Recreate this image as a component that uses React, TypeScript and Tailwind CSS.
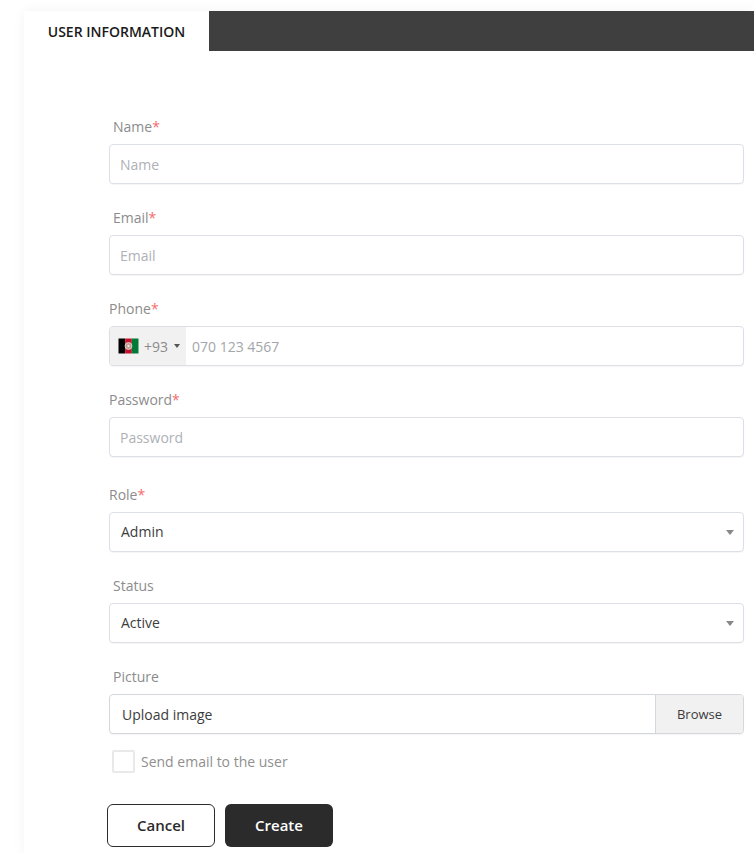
const font = { fontFamily: '"Open Sans", sans-serif' };

function Label({ text, req, mt = "", flush }: { text: string; req?: boolean; mt?: string; flush?: boolean }) {
  return (
    <div className={`h-[24px] text-[14px] leading-[24px] text-[#8c8c8c] ${flush ? "" : "pl-[4px]"} ${mt}`}>
      {text}
      {req && <span className="text-[#f56c6c]">*</span>}
    </div>
  );
}

function TextField({ placeholder }: { placeholder: string }) {
  return (
    <div className="mt-[5px] flex h-[40px] items-center rounded-[4px] border border-[#dcdfe8] bg-white pl-[10px] text-[14px] text-[#aeb1b6] shadow-[0_1px_1px_rgba(0,0,0,0.04)]">
      {placeholder}
    </div>
  );
}

function SelectField({ value }: { value: string }) {
  return (
    <div className="mt-[5px] flex h-[40px] items-center justify-between rounded-[4px] border border-[#dcdfe8] bg-white pb-[2px] pl-[11px] pr-[9px] text-[14px] text-[#3c3c3c] shadow-[0_1px_1px_rgba(0,0,0,0.04)]">
      {value}
      <span className="mt-[2px] h-0 w-0 border-x-[4px] border-t-[5px] border-x-transparent border-t-[#888888]" />
    </div>
  );
}

function Flag() {
  return (
    <svg width="21" height="16" viewBox="0 0 21 16" className="shrink-0">
      <rect width="21" height="16" fill="#f4f4f4" />
      <rect x="0.5" y="0.5" width="6.7" height="15" fill="#000000" />
      <rect x="7.2" y="0.5" width="6.6" height="15" fill="#c8102e" />
      <rect x="13.8" y="0.5" width="6.7" height="15" fill="#007a36" />
      <circle cx="10.5" cy="8" r="3.4" fill="#b9988f" stroke="#e3cfc6" strokeWidth="1" />
      <rect x="9.5" y="6.8" width="2" height="2.4" fill="#efe5df" />
    </svg>
  );
}

export default function App() {
  return (
    <div className="min-h-[854px] w-[754px] overflow-hidden bg-white pl-[24px] pt-[11px]" style={font}>
      <div className="h-[843px] bg-white shadow-[0_0_12px_rgba(0,0,0,0.05)]">
        <div className="flex h-[40px]">
          <div className="flex w-[185px] items-center justify-center text-[14px] font-semibold text-[#1a1a1a]">
            USER INFORMATION
          </div>
          <div className="flex-1 bg-[#3f3f3f]" />
        </div>

        <div className="pl-[85px] pr-[10px] pt-[64px]">
          <Label text="Name" req />
          <TextField placeholder="Name" />
          <Label text="Email" req mt="mt-[22px]" />
          <TextField placeholder="Email" />
          <Label text="Phone" req flush mt="mt-[22px]" />
          <div className="mt-[5px] flex h-[40px] items-center overflow-hidden rounded-[4px] border border-[#dcdfe8] bg-white text-[14px] shadow-[0_1px_1px_rgba(0,0,0,0.04)]">
            <div className="flex h-full w-[76px] items-center bg-[#f1f1f1] pl-[8px] text-[#8a8a8a]">
              <Flag />
              <span className="ml-[5px]">+93</span>
              <span className="ml-[6px] h-0 w-0 border-x-[3px] border-t-[4px] border-x-transparent border-t-[#555555]" />
            </div>
            <span className="pl-[6px] text-[#a3a6aa]">070 123 4567</span>
          </div>
          <Label text="Password" req flush mt="mt-[22px]" />
          <TextField placeholder="Password" />
          <Label text="Role" req flush mt="mt-[26px]" />
          <SelectField value="Admin" />
          <Label text="Status" mt="mt-[22px]" />
          <SelectField value="Active" />
          <Label text="Picture" mt="mt-[22px]" />
          <div className="mt-[5px] flex h-[40px] items-center overflow-hidden rounded-[4px] border border-[#d4d7de] bg-white text-[#3c3c3c] shadow-[0_1px_1px_rgba(0,0,0,0.04)]">
            <span className="flex-1 pl-[12px] text-[14px]">Upload image</span>
            <span className="flex h-full w-[88px] items-center justify-center border-l border-[#d4d7de] bg-[#f1f1f1] pt-[1px] text-[13px]">
              Browse
            </span>
          </div>
          <div className="mt-[16px] flex items-center pl-[3px]">
            <span className="h-[23px] w-[23px] rounded-[2px] border-2 border-[#e9e9e9] bg-white" />
            <span className="ml-[6px] pb-[1px] text-[14px] text-[#8f8f8f]">Send email to the user</span>
          </div>
          <div className="-ml-[2px] mt-[31px] flex gap-[10px]">
            <button className="h-[43px] w-[108px] rounded-[6px] border border-[#2b2b2b] bg-white text-[15px] font-semibold text-[#2b2b2b]">
              Cancel
            </button>
            <button className="h-[43px] w-[108px] rounded-[6px] bg-[#2b2b2b] text-[15px] font-semibold text-white">
              Create
            </button>
          </div>
        </div>
      </div>
    </div>
  );
}
